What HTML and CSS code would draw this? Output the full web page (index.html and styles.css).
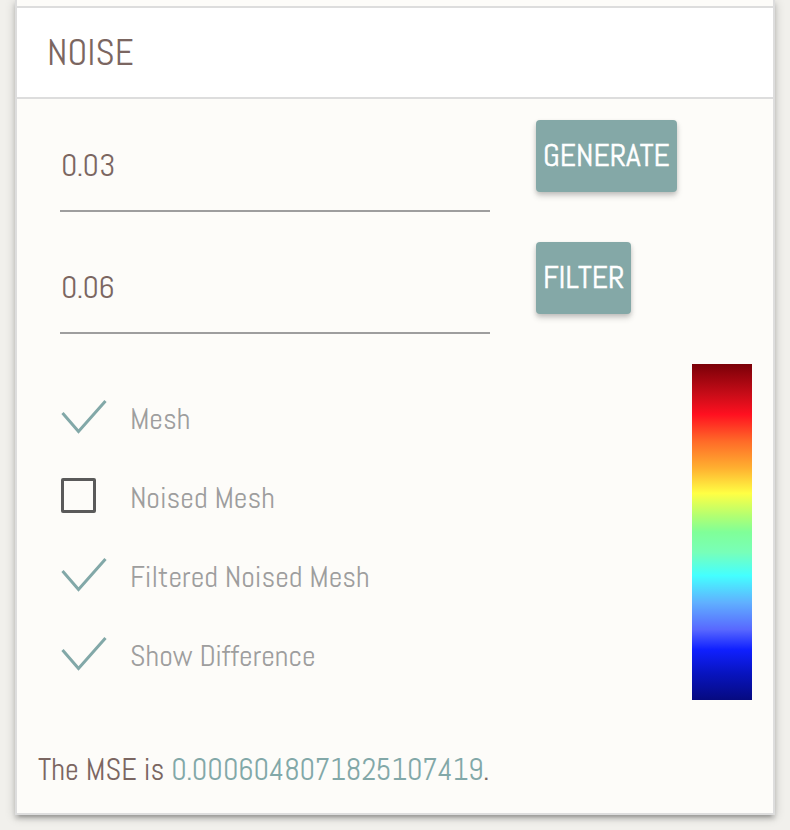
FILE: index.html
```html
<!DOCTYPE html>
<html lang="en">
<head>
<meta charset="utf-8">
<title>Noise</title>
<link rel="stylesheet" href="styles.css">
</head>
<body>
<div class="panel">
  <div class="prev"></div>
  <div class="header">NOISE</div>
  <div class="content">
    <div class="inputs">
      <div class="row">
        <div class="field">0.03</div>
        <button class="btn">GENERATE</button>
      </div>
      <div class="row">
        <div class="field">0.06</div>
        <button class="btn">FILTER</button>
      </div>
    </div>
    <div class="lower">
      <ul class="checks">
        <li class="check-item">
          <span class="icon"><svg class="tick" width="46" height="34" viewBox="0 0 46 34"><polyline points="1.5,13 17.5,31.5 44.5,1" /></svg></span>
          <span class="label">Mesh</span>
        </li>
        <li class="check-item">
          <span class="icon"><span class="box"></span></span>
          <span class="label">Noised Mesh</span>
        </li>
        <li class="check-item">
          <span class="icon"><svg class="tick" width="46" height="34" viewBox="0 0 46 34"><polyline points="1.5,13 17.5,31.5 44.5,1" /></svg></span>
          <span class="label">Filtered Noised Mesh</span>
        </li>
        <li class="check-item">
          <span class="icon"><svg class="tick" width="46" height="34" viewBox="0 0 46 34"><polyline points="1.5,13 17.5,31.5 44.5,1" /></svg></span>
          <span class="label">Show Difference</span>
        </li>
      </ul>
      <div class="colorbar"></div>
    </div>
    <p class="mse">The MSE is <span class="value">0.0006048071825107419</span>.</p>
  </div>
</div>
</body>
</html>
```
FILE: styles.css
```css
html, body {
  margin: 0;
  padding: 0;
}
body {
  background: #f1f0ec;
  font-family: "Abel", "Roboto Condensed", "Liberation Sans", sans-serif;
  height: 830px;
  overflow: hidden;
}
.panel {
  margin: 0 15px;
  border: 2px solid #dddddd;
  border-top: none;
  box-shadow: 0 4px 4px 0 rgba(0,0,0,0.14), 0 6px 2px -4px rgba(0,0,0,0.12), 0 2px 10px 0 rgba(0,0,0,0.2);
  background: #fdfcf9;
}
.prev {
  height: 6px;
  background: #fdfcf9;
  border-bottom: 2px solid #dddddd;
}
.header {
  height: 89px;
  background: #ffffff;
  border-bottom: 2px solid #dddddd;
  display: flex;
  align-items: center;
  padding-left: 30px;
  font-size: 37px;
  color: #7b6661;
  line-height: 1;
}
.content {
  padding: 21px 0 0 0;
}
.inputs {
  padding-left: 43px;
  display: flex;
  flex-direction: column;
  gap: 30px;
}
.row {
  display: flex;
  align-items: flex-start;
}
.field {
  width: 429px;
  height: 90px;
  border-bottom: 2px solid #9e9e9e;
  display: flex;
  align-items: center;
  padding-left: 1px;
  font-size: 32px;
  color: #7b6661;
  line-height: 1;
}
.btn {
  margin-left: 46px;
  height: 72px;
  padding: 0 7px;
  border: none;
  border-radius: 4px;
  background: #84a8a7;
  color: #ffffff;
  font-family: inherit;
  font-size: 31.5px;
  line-height: 1;
  -webkit-text-stroke: 0.5px #ffffff;
  box-shadow: 0 4px 6px 0 rgba(0,0,0,0.16), 0 2px 4px 0 rgba(0,0,0,0.12);
}
.lower {
  margin-top: 30px;
  display: flex;
  justify-content: space-between;
  align-items: flex-start;
}
.checks {
  list-style: none;
  margin: 15px 0 0 0;
  padding: 0 0 0 44px;
}
.check-item {
  height: 79px;
  display: flex;
  align-items: center;
}
.icon {
  width: 69px;
  height: 36px;
  display: flex;
  align-items: center;
}
.tick {
  display: block;
  fill: none;
  stroke: #82a8a8;
  stroke-width: 3;
  margin-top: -4px;
}
.box {
  display: block;
  width: 29px;
  height: 29px;
  border: 3px solid #5a5a5a;
  border-radius: 2px;
  margin-top: -5px;
}
.label {
  font-size: 30px;
  color: #9e9e9e;
  line-height: 1;
}
.colorbar {
  width: 60px;
  height: 336px;
  margin-right: 21px;
  background: linear-gradient(to bottom,
    #7a0008 0%,
    #c80c18 9%,
    #ff1020 15%,
    #ff6a28 23%,
    #ffb030 31%,
    #ffff44 38.5%,
    #b4ff70 45%,
    #80ff98 50%,
    #78ffb8 56%,
    #44ffff 63%,
    #60b0ff 71%,
    #5868ff 79%,
    #1020ff 85%,
    #0814c0 92%,
    #060a80 100%);
}
.mse {
  margin: 55px 0 0 0;
  padding: 0 0 28px 21px;
  font-size: 30.3px;
  line-height: 1;
  color: #7b6661;
}
.value {
  color: #82a8a8;
}
```
